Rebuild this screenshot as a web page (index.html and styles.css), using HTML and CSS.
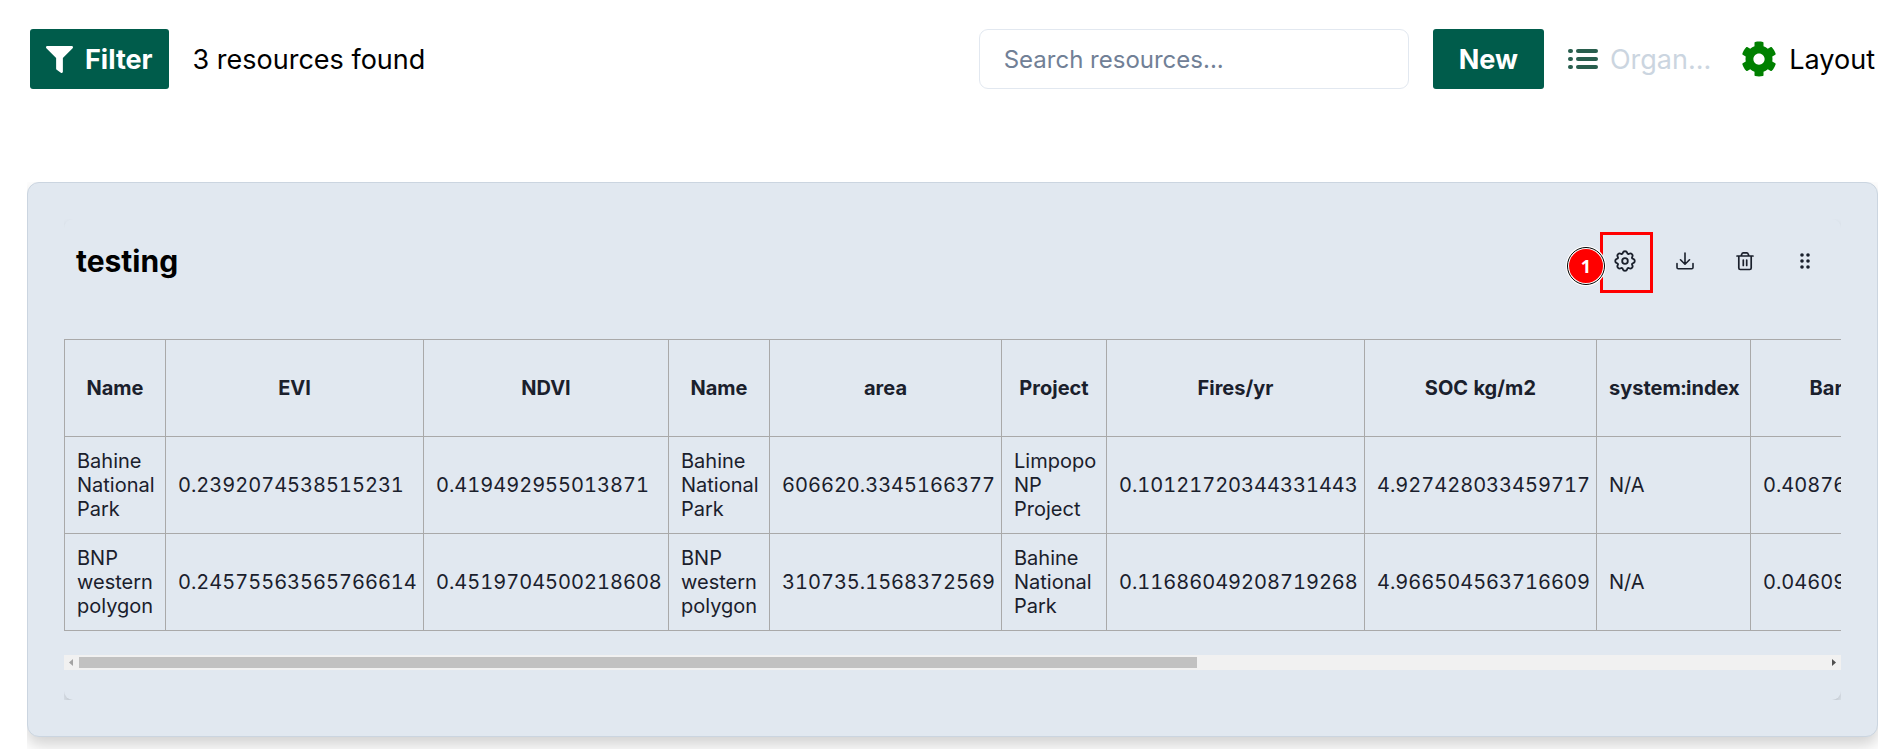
FILE: index.html
```html
<!DOCTYPE html>
<html lang="en">
<head>
<meta charset="utf-8">
<title>Resources</title>
<link rel="stylesheet" href="styles.css">
</head>
<body>
<header class="toolbar">
  <button class="btn btn-filter" type="button">
    <svg class="icon-filter" viewBox="0 0 512 512" aria-hidden="true"><path fill="currentColor" d="M488 0H24C3 0-8 26 7 41l185 185v206c0 8 4 15 10 20l80 56c16 11 38 0 38-20V226L505 41C520 26 509 0 488 0z"/></svg>
    Filter
  </button>
  <p class="count">3 resources found</p>
  <input class="search" type="search" aria-label="Search resources" placeholder="Search resources...">
  <button class="btn btn-new" type="button">New</button>
  <button class="tool tool-organize" type="button" disabled>
    <svg class="icon-list" viewBox="0 0 30 20" aria-hidden="true"><g fill="#285e4d"><rect x="0" y="0" width="5" height="4" rx="2"/><rect x="0" y="8" width="5" height="4" rx="2"/><rect x="0" y="16" width="5" height="4" rx="2"/><rect x="8" y="0" width="22" height="4" rx="2"/><rect x="8" y="8" width="22" height="4" rx="2"/><rect x="8" y="16" width="22" height="4" rx="2"/></g></svg>
    Organ...
  </button>
  <button class="tool tool-layout" type="button">
    <svg class="icon-cog" viewBox="0 0 512 512" aria-hidden="true"><path fill="green" d="M487.4 315.700l-42.600-24.600c4.300-23.200 4.300-47 0-70.200l42.600-24.600c4.900-2.800 7.100-8.600 5.500-14-11.100-35.600-30-67.800-54.700-94.600-3.800-4.100-10-5.100-14.800-2.300L380.800 110c-17.900-15.400-38.500-27.300-60.800-35.100V25.800c0-5.600-3.900-10.500-9.400-11.700-36.700-8.200-74.300-7.800-109.200 0-5.500 1.200-9.400 6.100-9.400 11.700V75c-22.200 7.900-42.800 19.800-60.800 35.100L88.700 85.500c-4.900-2.800-11-1.900-14.800 2.300-24.700 26.700-43.600 58.900-54.700 94.600-1.700 5.400.6 11.200 5.500 14L67.300 221c-4.300 23.200-4.300 47 0 70.200l-42.600 24.600c-4.900 2.800-7.100 8.600-5.500 14 11.100 35.600 30 67.800 54.700 94.600 3.800 4.100 10 5.100 14.800 2.300l42.600-24.600c17.900 15.400 38.500 27.300 60.800 35.100v49.200c0 5.600 3.900 10.500 9.400 11.700 36.700 8.200 74.300 7.800 109.200 0 5.500-1.200 9.400-6.100 9.400-11.700v-49.200c22.200-7.900 42.800-19.800 60.800-35.100l42.600 24.600c4.900 2.800 11 1.900 14.800-2.300 24.700-26.700 43.600-58.900 54.700-94.600 1.500-5.500-.7-11.300-5.600-14.100zM256 336c-44.100 0-80-35.900-80-80s35.900-80 80-80 80 35.900 80 80-35.900 80-80 80z"/></svg>
    Layout
  </button>
</header>

<main class="board">
  <section class="card">
    <div class="clip">
      <div class="panel">
        <div class="panel-head">
          <h2 class="title">testing</h2>
          <div class="actions">
            <button class="action" type="button" aria-label="Settings">
              <svg class="icon icon-settings" viewBox="-1 -1 18 18" aria-hidden="true"><g fill="none" stroke="currentColor" stroke-width="1.500"><path d="M9.796 1.343c-.527-1.790-3.065-1.790-3.592 0l-.094.319a.873.873 0 0 1-1.255.520l-.292-.160c-1.640-.892-3.433.902-2.540 2.541l.159.292a.873.873 0 0 1-.520 1.255l-.319.094c-1.790.527-1.790 3.065 0 3.592l.319.094a.873.873 0 0 1 .520 1.255l-.160.292c-.892 1.640.901 3.434 2.541 2.540l.292-.159a.873.873 0 0 1 1.255.520l.094.319c.527 1.790 3.065 1.790 3.592 0l.094-.319a.873.873 0 0 1 1.255-.520l.292.160c1.640.893 3.434-.902 2.540-2.541l-.159-.292a.873.873 0 0 1 .520-1.255l.319-.094c1.790-.527 1.790-3.065 0-3.592l-.319-.094a.873.873 0 0 1-.520-1.255l.160-.292c.893-1.640-.902-3.433-2.541-2.540l-.292.159a.873.873 0 0 1-1.255-.520z"/><circle cx="8" cy="8" r="2.300"/></g></svg>
              <span class="highlight"><span class="badge">1</span></span>
            </button>
            <button class="action" type="button" aria-label="Download">
              <svg class="icon" viewBox="0 0 20 20" aria-hidden="true"><path fill="none" stroke="currentColor" stroke-width="1.600" stroke-linecap="round" stroke-linejoin="round" d="M10 2v11M5.500 8.800L10 13.200l4.500-4.400M2 12.500V16.500c0 .8.500 1.300 1.300 1.300h13.400c.8 0 1.300-.5 1.300-1.300V12.500"/></svg>
            </button>
            <button class="action" type="button" aria-label="Delete">
              <svg class="icon" viewBox="0 0 20 20" aria-hidden="true"><path fill="none" stroke="currentColor" stroke-width="1.700" stroke-linecap="round" stroke-linejoin="round" d="M2 5h16M6.200 4.800l.7-2c.2-.7.600-1 1.300-1h3.600c.7 0 1.100.3 1.300 1l.7 2M3.800 5v12c0 .9.600 1.500 1.500 1.500h9.400c.9 0 1.500-.6 1.500-1.500V5M8.300 9v5.500M11.700 9v5.500"/></svg>
            </button>
            <button class="action" type="button" aria-label="Move">
              <svg class="icon" viewBox="0 0 20 20" aria-hidden="true"><g fill="currentColor"><circle cx="7" cy="4" r="1.800"/><circle cx="13" cy="4" r="1.800"/><circle cx="7" cy="10" r="1.800"/><circle cx="13" cy="10" r="1.800"/><circle cx="7" cy="16" r="1.800"/><circle cx="13" cy="16" r="1.800"/></g></svg>
            </button>
          </div>
        </div>
        <div class="table-wrap">
          <table class="data">
            <colgroup><col class="c-name"><col class="c-long"><col class="c-ndvi"><col class="c-name"><col class="c-area"><col class="c-project"><col class="c-long"><col class="c-soc"><col class="c-index"><col class="c-bare"></colgroup>
            <thead>
              <tr><th>Name</th><th>EVI</th><th>NDVI</th><th>Name</th><th>area</th><th>Project</th><th>Fires/yr</th><th>SOC kg/m2</th><th>system:index</th><th>Bare ground</th></tr>
            </thead>
            <tbody>
              <tr><td>Bahine National Park</td><td>0.2392074538515231</td><td>0.419492955013871</td><td>Bahine National Park</td><td>606620.3345166377</td><td>Limpopo NP Project</td><td>0.10121720344331443</td><td>4.927428033459717</td><td>N/A</td><td>0.40876</td></tr>
              <tr><td>BNP western polygon</td><td>0.24575563565766614</td><td>0.4519704500218608</td><td>BNP western polygon</td><td>310735.1568372569</td><td>Bahine National Park</td><td>0.11686049208719268</td><td>4.966504563716609</td><td>N/A</td><td>0.04609</td></tr>
            </tbody>
          </table>
        </div>
        <div class="scrollbar" aria-hidden="true">
          <svg class="arrow arrow-left" viewBox="0 0 15 15"><path d="M5 7.500L9 4v7z"/></svg>
          <div class="track"><div class="thumb"></div></div>
          <svg class="arrow" viewBox="0 0 15 15"><path d="M10 7.500L6 4v7z"/></svg>
        </div>
      </div>
    </div>
  </section>
</main>
</body>
</html>
```
FILE: styles.css
```css
* { box-sizing: border-box; }

body {
  margin: 0;
  background: #fff;
  color: #000;
  font-family: Inter, "Liberation Sans", sans-serif;
  font-size: 27px;
}

button, input { font: inherit; }

button {
  border: 0;
  padding: 0;
  background: none;
  color: inherit;
}

.toolbar {
  display: flex;
  align-items: center;
  padding: 29px 25px 0 30px;
}

.btn {
  display: flex;
  align-items: center;
  justify-content: center;
  height: 60px;
  border-radius: 3px;
  background: #005c4b;
  color: #fff;
  font-weight: 700;
}

.btn-filter { padding: 0 16px; gap: 12px; }
.icon-filter { width: 27px; height: 27px; }

.count { margin: 0 auto 0 24px; }

.search {
  width: 430px;
  height: 60px;
  padding: 0 24px;
  border: 1px solid #e2e8f0;
  border-radius: 9px;
  background: #fff;
  font-size: 24px;
  outline: none;
  appearance: none;
}

.search::placeholder { color: #718096; opacity: 1; }

.btn-new { margin-left: 24px; padding: 0 26px; }

.tool { display: flex; align-items: center; }
.tool-organize { margin-left: 24px; gap: 12px; color: #cbd5e0; }
.icon-list { width: 30px; height: 20px; }
.tool-layout { margin-left: 30px; gap: 12px; }
.icon-cog { width: 36px; height: 36px; }

.board {
  margin: 93px 22px 0 27px;
  padding-bottom: 12px;
  overflow: hidden;
}

.card {
  padding: 36px;
  border: 1px solid #cbd5e0;
  border-radius: 12px;
  background: #e1e8f0;
  box-shadow: 0 8px 16px rgba(0, 0, 0, 0.18);
}

.clip { overflow: hidden; }

.panel {
  padding-bottom: 30px;
  border-radius: 9px;
  background: #e1e8f0;
  box-shadow: 0 4px 6px rgba(0, 0, 0, 0.15);
}

.panel-head {
  display: flex;
  align-items: center;
  justify-content: space-between;
  height: 120px;
  padding: 0 6px 36px 12px;
}

.title { margin: 0; font-size: 30px; line-height: 36px; }

.actions { display: flex; color: #1a202c; }

.action {
  position: relative;
  display: flex;
  align-items: center;
  justify-content: center;
  width: 60px;
  height: 60px;
}

.icon { width: 20px; height: 20px; }
.icon-settings { width: 22px; height: 22px; }

.highlight {
  position: absolute;
  left: 5px;
  top: 1px;
  width: 53px;
  height: 61px;
  border: 3px solid #f00;
}

.badge {
  position: absolute;
  left: -37px;
  top: 11px;
  width: 40px;
  height: 40px;
  border: 3px solid #fff;
  outline: 1px solid #000;
  outline-offset: -2px;
  border-radius: 50%;
  background: #f00;
  color: #fff;
  font: 700 18px/34px "Open Sans", sans-serif;
  text-align: center;
}

.table-wrap { overflow: hidden; padding-bottom: 24px; }

.data {
  width: 1924px;
  table-layout: fixed;
  border-collapse: collapse;
  color: #1a202c;
  font-size: 20px;
  line-height: 24px;
  font-variant-numeric: lining-nums tabular-nums;
}

.data th, .data td {
  height: 97px;
  padding: 12px 6px 12px 12px;
  border: 1px solid #a9a9a9;
}

.data th { padding: 12px; font-weight: 700; white-space: nowrap; }
.data td { text-align: left; }

.c-name { width: 101px; }
.c-long { width: 258px; }
.c-ndvi { width: 245px; }
.c-area { width: 232px; }
.c-project { width: 105px; }
.c-soc { width: 232px; }
.c-index { width: 154px; }
.c-bare { width: 238px; }

.scrollbar { display: flex; height: 15px; background: #f1f1f1; }
.arrow { width: 15px; height: 15px; fill: #505050; }
.arrow-left { fill: #a3a3a3; }
.track { flex: 1; padding: 2px 0; }
.thumb { width: 64%; height: 11px; background: #c1c1c1; }
```
